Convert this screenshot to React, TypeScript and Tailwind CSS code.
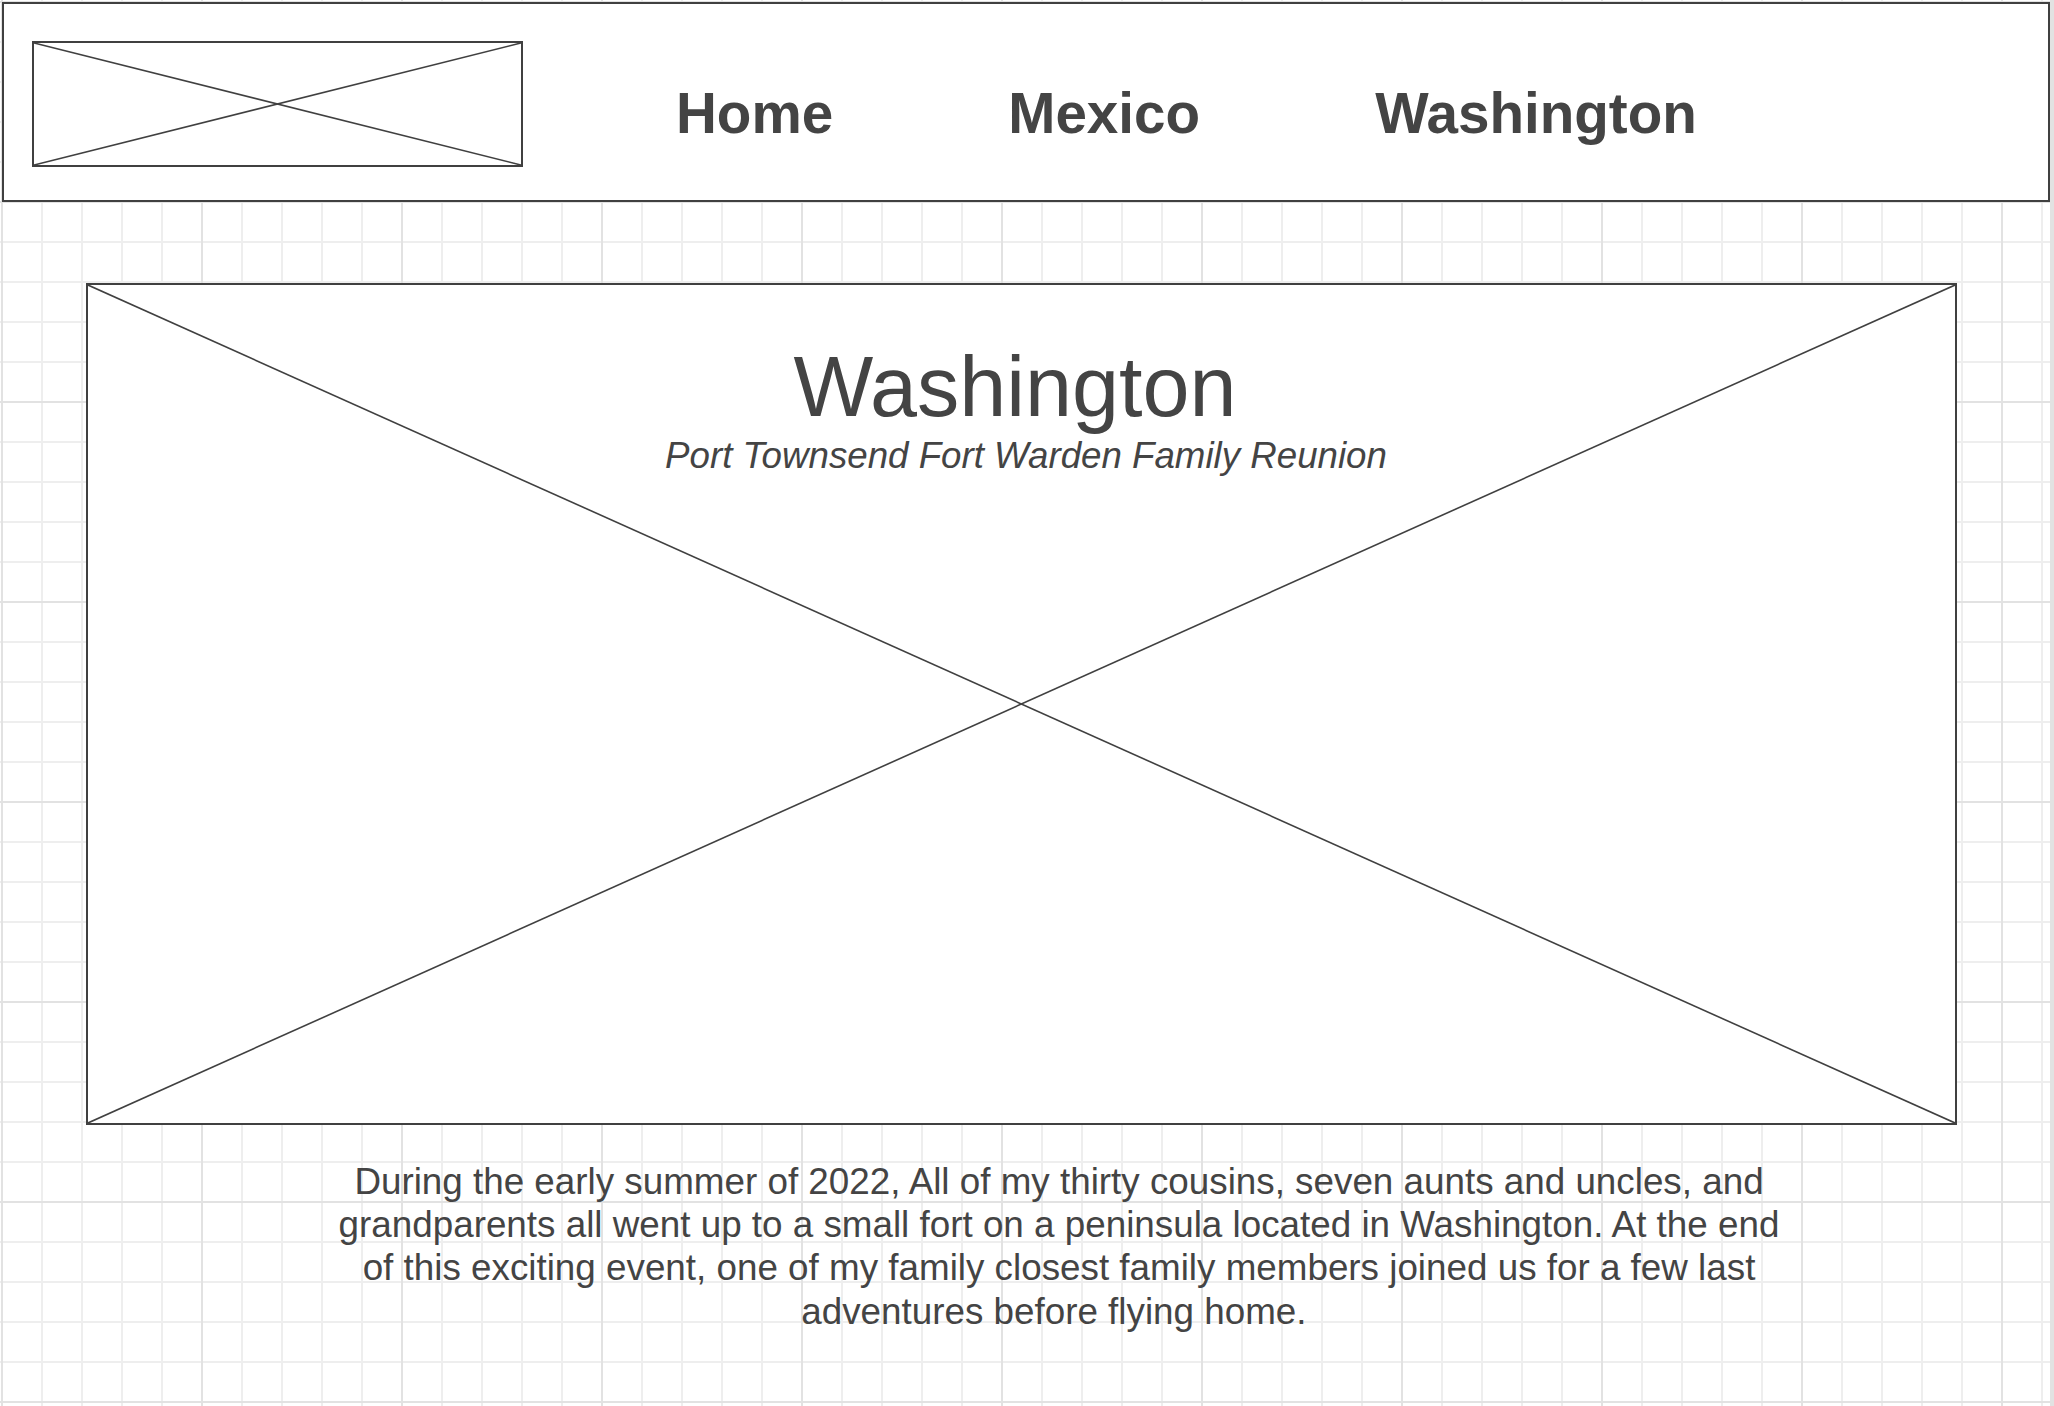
import React from "react";

function XBox({ className }: { className?: string }) {
  return (
    <svg
      className={className}
      viewBox="0 0 100 100"
      preserveAspectRatio="none"
      aria-hidden="true"
    >
      <line x1="0" y1="0" x2="100" y2="100" stroke="#404040" strokeWidth="1.6" vectorEffect="non-scaling-stroke" />
      <line x1="100" y1="0" x2="0" y2="100" stroke="#404040" strokeWidth="1.6" vectorEffect="non-scaling-stroke" />
    </svg>
  );
}

export default function App() {
  return (
    <div
      className="w-[2054px] h-[1406px] overflow-hidden bg-white border-r-4 border-[#e2e2e2] text-[#444444] bg-[linear-gradient(to_right,#e2e2e2_2px,transparent_2px),linear-gradient(to_bottom,#e2e2e2_2px,transparent_2px),linear-gradient(to_right,#eeeeee_2px,transparent_2px),linear-gradient(to_bottom,#eeeeee_2px,transparent_2px)] bg-[size:200px_200px,200px_200px,40px_40px,40px_40px] bg-[position:1px_1px,1px_1px,1px_1px,1px_1px]"
      style={{ fontFamily: '"Liberation Sans", Arial, sans-serif' }}
    >
      <div className="pt-[2px] pl-[2px]">
        <header className="w-[2048px] h-[200px] border-2 border-[#404040] bg-white flex items-start">
          <div className="ml-[28px] mt-[37px] w-[491px] h-[126px] border-2 border-[#404040] relative shrink-0">
            <XBox className="absolute inset-0 w-full h-full" />
          </div>
          <nav className="ml-[153px] mt-[76px] flex gap-[175px] text-[56.6px] font-bold leading-[1.2]">
            <span>Home</span>
            <span>Mexico</span>
            <span>Washington</span>
          </nav>
        </header>
      </div>

      <section className="ml-[86px] mt-[81px] w-[1871px] h-[842px] border-2 border-[#404040] bg-white relative">
        <XBox className="absolute inset-0 w-full h-full" />
        <div className="relative pt-[55px] flex flex-col items-center text-center">
          <h1 className="mr-[13px] text-[84.5px] leading-[94px] font-normal">Washington</h1>
          <p className="ml-[9px] text-[36.7px] leading-[1.2] italic">Port Townsend Fort Warden Family Reunion</p>
        </div>
      </section>

      <p className="ml-[329px] mt-[35px] w-[1460px] text-center text-[36.8px] leading-[43.2px]">
        During the early summer of 2022, All of my thirty cousins, seven aunts and uncles, and grandparents all went up to a small fort on a peninsula located in Washington. At the end of this exciting event, one of my family closest family members joined us for a few last adventures before flying home.{"\u00A0"}
      </p>
    </div>
  );
}
